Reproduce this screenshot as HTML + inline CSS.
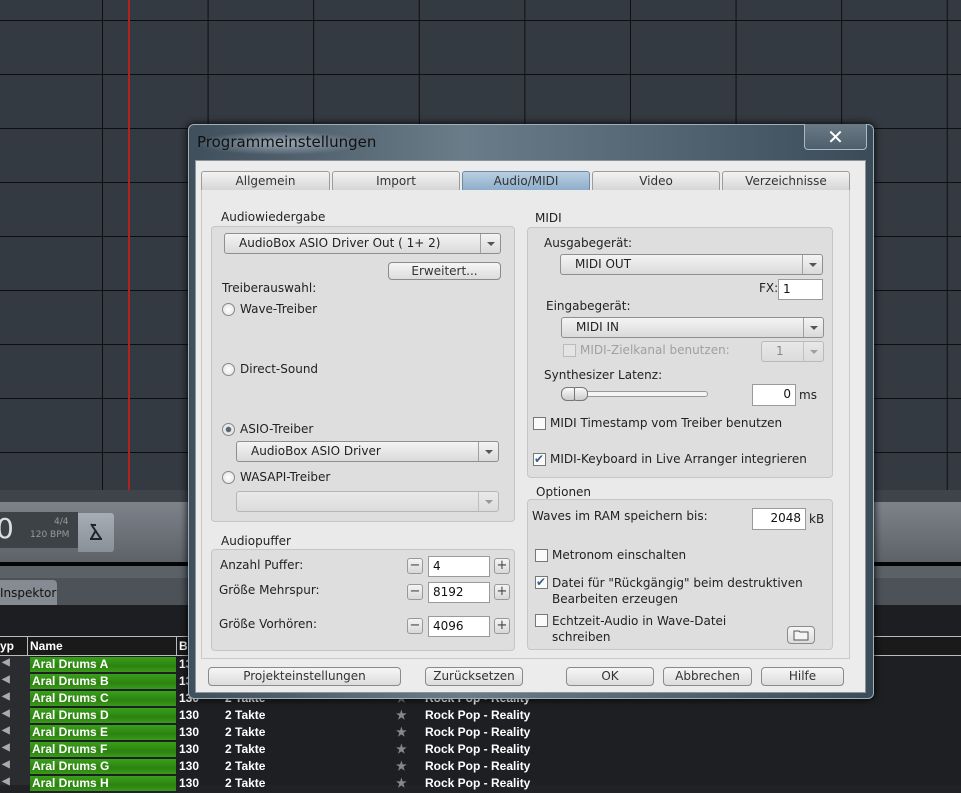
<!DOCTYPE html>
<html><head><meta charset="utf-8"><style>
*{box-sizing:border-box;margin:0;padding:0}
body{width:961px;height:785px;overflow:hidden;background:#202225;font-family:"DejaVu Sans","Liberation Sans",sans-serif;position:relative}
.a{position:absolute}
.grid{left:0;top:0;width:961px;height:490px;background-color:#343a41;
background-image:linear-gradient(#0d0f12 0 1px,transparent 1px),linear-gradient(90deg,#0d0f12 0 1px,transparent 1px);
background-size:961px 54px,105.6px 490px;background-position:0 20px,102px 0}
.t{font-size:12px;color:#222;white-space:nowrap}
.btn{border:1px solid #8a8a8a;border-radius:4px;background:linear-gradient(#f6f6f6,#dcdcdc);font-size:12px;color:#333;text-align:center;white-space:nowrap}
.combo{border:1px solid #8f8f8f;border-radius:3px;background:linear-gradient(#f4f4f4,#dadada);font-size:12px;color:#222;white-space:nowrap;padding-left:14px}
.combo .ar{position:absolute;right:0;top:0;bottom:0;width:20px;border-left:1px solid #a0a0a0}
.combo .ar:after{content:"";position:absolute;left:6px;top:50%;margin-top:-2px;border:4px solid transparent;border-top:4px solid #555;border-bottom:0}
.panel{border:1px solid #c6c6c6;border-radius:4px;background:#dedede}
.rad{width:13px;height:13px;border:1px solid #888;border-radius:50%;background:radial-gradient(#fff,#e0e0e0)}
.chk{width:13px;height:13px;border:1px solid #777;background:#fafafa}
.inp{border:1px solid #9a9a9a;background:#fff;font-size:12px;color:#111;padding:2px 4px}
.sm{width:16px;height:16px;border:1px solid #999;border-radius:3px;background:linear-gradient(#f4f4f4,#d8d8d8);font-size:13px;line-height:13px;text-align:center;color:#444}
.row{left:0;width:961px;height:17px;font-size:12px;font-weight:bold;color:#fff;font-family:"Liberation Sans",sans-serif}
.tab{top:171px;height:20px;border:1px solid #9c9c9c;border-radius:3px 3px 0 0;background:linear-gradient(#f3f3f3,#d6d6d6);font-size:12px;color:#333;text-align:center;line-height:18px}
</style></head><body>
<div class="a grid"></div>
<div class="a" style="left:128px;top:0;width:2px;height:490px;background:#b02222"></div>
<div class="a" style="left:0;top:490px;width:961px;height:12px;background:#3e444a"></div>
<div class="a" style="left:0;top:502px;width:961px;height:60px;background:linear-gradient(#7d838a,#5c6268)"></div>
<div class="a" style="left:0;top:512px;width:78px;height:36px;background:#3d4247"></div>
<div class="a" style="left:-4px;top:512px;font-size:28px;color:#ddd">0</div>
<div class="a" style="left:54px;top:517px;font-size:9px;color:#999">4/4</div>
<div class="a" style="left:30px;top:530px;font-size:9px;color:#999">120 BPM</div>
<div class="a" style="left:78px;top:513px;width:36px;height:39px;background:linear-gradient(#a7adb4,#8a9097);border-radius:0 3px 3px 0"></div>
<svg class="a" style="left:88px;top:522px" width="16" height="20" viewBox="0 0 16 20"><path d="M3 2L13 17M2 17H14M8 8L3 17M4 3H8" stroke="#1d2630" stroke-width="2" fill="none"/></svg>
<div class="a" style="left:0;top:562px;width:961px;height:4px;background:#050505"></div>
<div class="a" style="left:0;top:566px;width:961px;height:12px;background:#5b6167"></div>
<div class="a" style="left:0;top:578px;width:961px;height:27px;background:#4c5258"></div>
<div class="a" style="left:0;top:580px;width:57px;height:25px;background:#858b92;border-radius:0 4px 0 0;font-size:12px;color:#111;line-height:26px">Inspektor</div>
<div class="a" style="left:0;top:605px;width:961px;height:31px;background:#1c1e21"></div>
<div class="a" style="left:0;top:636px;width:961px;height:20px;background:#1a1a1a;border-top:1px solid #bbb;border-bottom:1px solid #bbb"></div>
<div class="a" style="left:27px;top:637px;width:1px;height:18px;background:#bbb"></div>
<div class="a" style="left:176px;top:637px;width:1px;height:18px;background:#bbb"></div>
<div class="a" style="left:0;top:639px;font-size:12px;font-weight:bold;color:#fff;font-family:'Liberation Sans',sans-serif">yp</div>
<div class="a" style="left:30px;top:639px;font-size:12px;font-weight:bold;color:#fff;font-family:'Liberation Sans',sans-serif">Name</div>
<div class="a" style="left:179px;top:639px;font-size:12px;font-weight:bold;color:#fff;font-family:'Liberation Sans',sans-serif">B</div>
<div class="a" style="left:0;top:656px;width:961px;height:129px;background:#1d1f22"></div>
<div class="a" style="left:0;top:656px;width:30px;height:129px;background:#2a2c2f"></div>
<div id="rows"></div>
<script>
var L="ABCDEFGH",h="";
for(var i=0;i<8;i++){var y=656+i*17;
h+='<div class="a" style="left:30px;top:'+(y+1)+'px;width:146px;height:15px;background:linear-gradient(#3aa01a,#2c8210 60%,#3a9a1a)"></div>';
h+='<div class="a row" style="top:'+(y+1)+'px"><span class="a" style="left:2px;color:#aaa;font-size:10px">◀</span><span class="a" style="left:32px">Aral Drums '+L[i]+'</span><span class="a" style="left:179px">130</span><span class="a" style="left:225px">2 Takte</span><span class="a" style="left:396px;color:#888">★</span><span class="a" style="left:425px">Rock Pop - Reality</span></div>';}
document.getElementById('rows').innerHTML=h;
</script>

<!-- dialog -->
<div class="a" style="left:188px;top:124px;width:686px;height:575px;border-radius:6px;border:1px solid #9fb0bd;background:linear-gradient(90deg,#3f4f5c,#6b7c89 40%,#536472 70%,#3b4b58);box-shadow:0 0 8px #000"></div>
<div class="a" style="left:195px;top:131px;width:170px;height:24px;background:radial-gradient(ellipse at center,rgba(220,230,240,.55),rgba(220,230,240,0) 70%)"></div>
<div class="a" style="left:197px;top:133px;font-size:15px;color:#111;font-family:'DejaVu Sans',sans-serif">Programmeinstellungen</div>
<div class="a" style="left:804px;top:124px;width:63px;height:26px;border:1px solid #aabac6;border-top:0;border-radius:0 0 4px 4px;background:linear-gradient(#6a7a86,#4e5e6a);color:#fff;font-size:20px;font-weight:bold;text-align:center;line-height:26px">✕</div>
<div class="a" style="left:195px;top:160px;width:671px;height:533px;background:#ececec;border:1px solid #8a949c"></div>
<div class="a tab" style="left:201px;width:129px">Allgemein</div>
<div class="a tab" style="left:332px;width:128px">Import</div>
<div class="a tab" style="left:462px;width:128px;background:linear-gradient(#b9cfe2,#8eaecb);border-color:#6d8aa4">Audio/MIDI</div>
<div class="a tab" style="left:592px;width:128px">Video</div>
<div class="a tab" style="left:722px;width:128px">Verzeichnisse</div>
<div class="a" style="left:201px;top:190px;width:649px;height:469px;border:1px solid #c9c9c9;border-top:0;background:#eaeaea"></div>

<div class="a t" style="left:221px;top:210px">Audiowiedergabe</div>
<div class="a panel" style="left:211px;top:226px;width:304px;height:296px"></div>
<div class="a combo" style="left:224px;top:233px;width:277px;height:21px;line-height:19px">AudioBox ASIO Driver Out ( 1+ 2)<div class="ar"></div></div>
<div class="a btn" style="left:388px;top:262px;width:113px;height:18px;line-height:16px">Erweitert...</div>
<div class="a t" style="left:222px;top:281px">Treiberauswahl:</div>
<div class="a rad" style="left:222px;top:303px"></div><div class="a t" style="left:240px;top:302px">Wave-Treiber</div>
<div class="a rad" style="left:222px;top:363px"></div><div class="a t" style="left:240px;top:362px">Direct-Sound</div>
<div class="a rad" style="left:222px;top:423px;background:radial-gradient(#5a6670 30%,#e8e8e8 40%)"></div><div class="a t" style="left:240px;top:422px">ASIO-Treiber</div>
<div class="a combo" style="left:236px;top:441px;width:263px;height:21px;line-height:19px">AudioBox ASIO Driver<div class="ar"></div></div>
<div class="a rad" style="left:222px;top:471px"></div><div class="a t" style="left:240px;top:470px">WASAPI-Treiber</div>
<div class="a combo" style="left:236px;top:491px;width:263px;height:21px;opacity:.5"><div class="ar"></div></div>

<div class="a t" style="left:221px;top:534px">Audiopuffer</div>
<div class="a panel" style="left:211px;top:549px;width:304px;height:102px"></div>
<div class="a t" style="left:220px;top:558px">Anzahl Puffer:</div>
<div class="a t" style="left:219px;top:583px">Größe Mehrspur:</div>
<div class="a t" style="left:219px;top:617px">Größe Vorhören:</div>
<div class="a sm" style="left:407px;top:558px">−</div><div class="a inp" style="left:428px;top:556px;width:62px;height:21px">4</div><div class="a sm" style="left:494px;top:558px">+</div>
<div class="a sm" style="left:407px;top:584px">−</div><div class="a inp" style="left:428px;top:582px;width:62px;height:21px">8192</div><div class="a sm" style="left:494px;top:584px">+</div>
<div class="a sm" style="left:407px;top:618px">−</div><div class="a inp" style="left:428px;top:616px;width:62px;height:21px">4096</div><div class="a sm" style="left:494px;top:618px">+</div>

<div class="a t" style="left:535px;top:211px">MIDI</div>
<div class="a panel" style="left:527px;top:227px;width:306px;height:251px"></div>
<div class="a t" style="left:544px;top:236px">Ausgabegerät:</div>
<div class="a combo" style="left:560px;top:254px;width:263px;height:21px;line-height:19px">MIDI OUT<div class="ar"></div></div>
<div class="a t" style="left:759px;top:281px">FX:</div><div class="a inp" style="left:778px;top:279px;width:45px;height:21px">1</div>
<div class="a t" style="left:546px;top:299px">Eingabegerät:</div>
<div class="a combo" style="left:561px;top:317px;width:263px;height:21px;line-height:19px">MIDI IN<div class="ar"></div></div>
<div class="a chk" style="left:563px;top:344px;border-color:#bbb;background:#e4e4e4"></div><div class="a t" style="left:580px;top:343px;color:#a0a0a0">MIDI-Zielkanal benutzen:</div>
<div class="a combo" style="left:761px;top:341px;width:63px;height:21px;line-height:19px;opacity:.45">1<div class="ar"></div></div>
<div class="a t" style="left:544px;top:368px">Synthesizer Latenz:</div>
<div class="a" style="left:562px;top:391px;width:146px;height:6px;border:1px solid #999;border-radius:3px;background:#f5f5f5"></div>
<div class="a" style="left:561px;top:387px;width:14px;height:14px;border:1px solid #777;border-radius:6px 2px 2px 6px;background:linear-gradient(#fafafa,#ccc)"></div>
<div class="a" style="left:574px;top:387px;width:14px;height:14px;border:1px solid #777;border-radius:2px 6px 6px 2px;background:linear-gradient(#fafafa,#ccc)"></div>
<div class="a inp" style="left:752px;top:384px;width:44px;height:22px;text-align:right">0</div><div class="a t" style="left:799px;top:388px">ms</div>
<div class="a chk" style="left:533px;top:417px"></div><div class="a t" style="left:550px;top:416px">MIDI Timestamp vom Treiber benutzen</div>
<div class="a chk" style="left:533px;top:453px;color:#3b5f86;font-size:12px;line-height:10px;font-weight:bold">✔</div><div class="a t" style="left:550px;top:452px">MIDI-Keyboard in Live Arranger integrieren</div>

<div class="a t" style="left:536px;top:485px">Optionen</div>
<div class="a panel" style="left:527px;top:499px;width:306px;height:151px"></div>
<div class="a t" style="left:532px;top:509px">Waves im RAM speichern bis:</div>
<div class="a inp" style="left:752px;top:508px;width:54px;height:22px;text-align:right">2048</div><div class="a t" style="left:809px;top:512px">kB</div>
<div class="a chk" style="left:535px;top:549px"></div><div class="a t" style="left:552px;top:548px">Metronom einschalten</div>
<div class="a chk" style="left:535px;top:576px;color:#3b5f86;font-size:12px;line-height:10px;font-weight:bold">✔</div><div class="a t" style="left:552px;top:575px;line-height:16px">Datei für "Rückgängig" beim destruktiven<br>Bearbeiten erzeugen</div>
<div class="a chk" style="left:535px;top:614px"></div><div class="a t" style="left:552px;top:613px;line-height:16px">Echtzeit-Audio in Wave-Datei<br>schreiben</div>
<div class="a btn" style="left:787px;top:626px;width:28px;height:18px"></div>
<svg class="a" style="left:793px;top:629px" width="16" height="12" viewBox="0 0 16 12"><path d="M1 2H6L7 3H15V11H1Z" fill="#f4f4f4" stroke="#555"/></svg>

<div class="a btn" style="left:208px;top:667px;width:193px;height:19px;line-height:17px">Projekteinstellungen</div>
<div class="a btn" style="left:425px;top:667px;width:98px;height:19px;line-height:17px">Zurücksetzen</div>
<div class="a btn" style="left:566px;top:667px;width:88px;height:19px;line-height:17px">OK</div>
<div class="a btn" style="left:663px;top:667px;width:89px;height:19px;line-height:17px">Abbrechen</div>
<div class="a btn" style="left:761px;top:667px;width:83px;height:19px;line-height:17px">Hilfe</div>
</body></html>
